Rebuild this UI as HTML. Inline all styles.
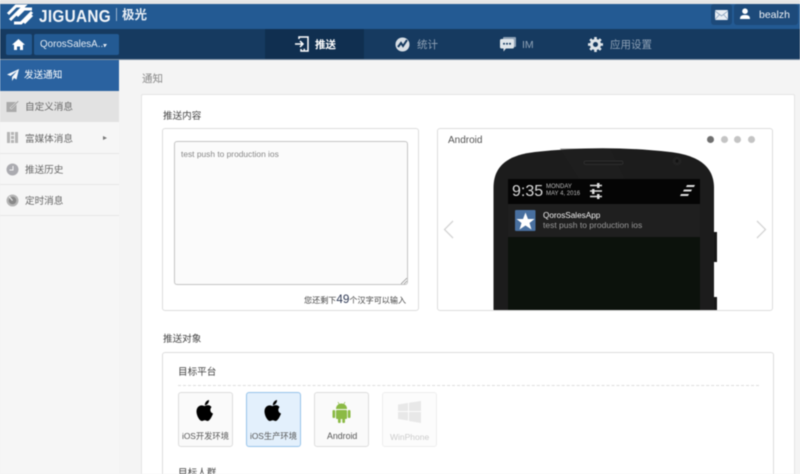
<!DOCTYPE html>
<html><head><meta charset="utf-8">
<style>
html,body{margin:0;padding:0;width:800px;height:474px;overflow:hidden;background:#f4f4f4}
body{position:relative;font-family:"Liberation Sans","Noto Sans CJK SC",sans-serif;color:#444}
.a{position:absolute}
.t{position:absolute;white-space:nowrap;line-height:14px}
#w{position:absolute;left:0;top:0;width:800px;height:474px;overflow:hidden;filter:blur(.45px)}
</style></head><body><div id="w">
<div class="a" style="left:0;top:0;width:800px;height:4px;background:#e6e6e6"></div>
<div class="a" style="left:0;top:4px;width:800px;height:25px;background:#235a93"></div>
<div class="a" style="left:0;top:29px;width:800px;height:30px;background:#163a60;border-bottom:1px solid #7d8fa3;box-sizing:content-box"></div>
<!-- logo -->
<svg class="a" style="left:6px;top:3px" width="28" height="23" viewBox="0 0 28 23" fill="none" stroke="#fff" stroke-width="3"><path d="M2 11 L10 3 H18 L4 17"/><path d="M8 20 H15 L26 9"/><path d="M11 13 L18 6 H26"/><path d="M18 20 L26 12"/></svg>
<div class="t" style="left:39px;top:6px;font-size:17.5px;line-height:20px;font-weight:bold;color:#f2f5f9;letter-spacing:.35px;transform:scaleX(.875);transform-origin:left center">JIGUANG</div>
<div class="a" style="left:116px;top:8px;width:1px;height:13px;background:#9db5cf"></div>
<div class="t" style="left:122px;top:7px;font-size:12.5px;line-height:16px;color:#e8eef5;font-weight:bold">极光</div>
<!-- top right -->
<div class="a" style="left:711px;top:4px;width:21px;height:21px;background:#1d4a7a;border-radius:3px"></div>
<svg class="a" style="left:715px;top:10px" width="13" height="10" viewBox="0 0 13 10"><rect width="13" height="10" rx="1" fill="#e9eef4"/><path d="M0 1 L6.5 6 L13 1 M0 9.5 L4.5 4.5 M13 9.5 L8.5 4.5" stroke="#8ba4bf" stroke-width=".8" fill="none"/></svg>
<div class="a" style="left:734px;top:4px;width:64px;height:21px;background:#1d4a7a;border-radius:3px"></div>
<svg class="a" style="left:739px;top:8px" width="12" height="12" viewBox="0 0 12 12" fill="#fff"><circle cx="6" cy="3.2" r="2.8"/><path d="M1 11 C1 7.5 3 7 6 7 C9 7 11 7.5 11 11 Z"/></svg>
<div class="t" style="left:759px;top:8px;font-size:10.5px;color:#f0f3f7">bealzh</div>
<!-- left nav controls -->
<div class="a" style="left:6px;top:34px;width:26px;height:21px;background:#235a93;border-radius:2px"></div>
<svg class="a" style="left:12px;top:39px" width="13" height="11" viewBox="0 0 13 11" fill="#fff"><path d="M6.5 0 L13 5.8 H11 V11 H8 V7.5 H5 V11 H2 V5.8 H0 Z"/></svg>
<div class="a" style="left:34px;top:34px;width:85px;height:21px;background:#235a93;border-radius:2px"></div>
<div class="t" style="left:40px;top:38px;font-size:9.8px;color:#e4ebf3">QorosSalesA...</div>
<div class="a" style="left:103px;top:44px;width:0;height:0;border-left:2.5px solid transparent;border-right:2.5px solid transparent;border-top:3px solid #e4ebf3"></div>
<!-- tabs -->
<div class="a" style="left:265px;top:29px;width:99px;height:30px;background:#102f50"></div>
<svg class="a" style="left:294px;top:36px" width="16" height="16" viewBox="0 0 16 16" fill="none" stroke="#fff" stroke-width="1.5"><path d="M5 3 V1 H14 V15 H7 V13"/><path d="M1 8 H8"/><path d="M6 5 L9 8 L6 11"/><path d="M9.5 13.5 H11" /></svg>
<div class="t" style="left:315px;top:38px;font-size:10.5px;font-weight:bold;color:#fff">推送</div>
<svg class="a" style="left:395px;top:37px" width="15" height="15" viewBox="0 0 15 15"><circle cx="7.500" cy="7.500" r="7" fill="#d8dfe6"/><path d="M3 10 L6 6 L8 9 L12 3" stroke="#163a60" stroke-width="2" fill="none"/></svg>
<div class="t" style="left:417px;top:38px;font-size:10.5px;color:#8fa2b6">统计</div>
<svg class="a" style="left:500px;top:37px" width="16" height="15" viewBox="0 0 16 15"><rect x="3" y="0" width="13" height="10" rx="1" fill="#8fa2b6"/><path d="M1.500 2 H12.500 Q14 2 14 3.500 V10 Q14 11.500 12.500 11.500 H6 L3.500 14.500 V11.500 H1.500 Q0 11.500 0 10 V3.500 Q0 2 1.500 2 Z" fill="#dfe5ea"/><circle cx="4" cy="6.700" r="1" fill="#163a60"/><circle cx="7" cy="6.700" r="1" fill="#163a60"/><circle cx="10" cy="6.700" r="1" fill="#163a60"/></svg>
<div class="t" style="left:522px;top:38px;font-size:10.5px;color:#8fa2b6">IM</div>
<svg class="a" style="left:588px;top:37px" width="15" height="15" viewBox="0 0 15 15"><circle cx="7.500" cy="7.500" r="4" fill="none" stroke="#dfe5ea" stroke-width="3"/><g stroke="#dfe5ea" stroke-width="2.600"><path d="M7.500 0 V3"/><path d="M7.500 12 V15"/><path d="M0 7.500 H3"/><path d="M12 7.500 H15"/><path d="M2.200 2.200 L4.300 4.300"/><path d="M10.700 10.700 L12.800 12.800"/><path d="M2.200 12.800 L4.300 10.700"/><path d="M10.700 4.300 L12.800 2.200"/></g></svg>
<div class="t" style="left:610px;top:38px;font-size:10.5px;color:#8fa2b6">应用设置</div>
<!-- sidebar -->
<div class="a" style="left:0;top:60px;width:119px;height:414px;background:#f6f6f6"></div>
<div class="a" style="left:0;top:60px;width:119px;height:31px;background:#2a62a0"></div>
<div class="a" style="left:0;top:91px;width:119px;height:31px;background:#e2e2e2"></div>
<div class="a" style="left:0;top:153px;width:119px;height:1px;background:#e6e6e6"></div>
<div class="a" style="left:0;top:184px;width:119px;height:1px;background:#e6e6e6"></div>
<div class="a" style="left:0;top:215px;width:119px;height:1px;background:#e6e6e6"></div>
<svg class="a" style="left:7px;top:69px" width="12" height="12" viewBox="0 0 12 12" fill="#f2f5f9"><path d="M12 0 L0 5.500 L3.500 7 L10 2 L5 8 V12 L7 9 L9.500 10.500 Z"/></svg>
<div class="t" style="left:24px;top:69px;font-size:9.6px;color:#fff">发送通知</div>
<svg class="a" style="left:6px;top:100px" width="13" height="13" viewBox="0 0 13 13"><rect x="0.500" y="2" width="10" height="10" fill="#aaa"/><path d="M4 8 L12 0.500 L13 1.500 L5.500 9 Z" fill="#999" stroke="#e2e2e2" stroke-width=".6"/></svg>
<div class="t" style="left:25px;top:101px;font-size:9.6px;color:#666">自定义消息</div>
<svg class="a" style="left:7px;top:132px" width="11" height="11" viewBox="0 0 11 11" fill="#b5b5b5"><rect x="0" y="0" width="3" height="11"/><rect x="8" y="0" width="3" height="11"/><rect x="4" y="0" width="3" height="3"/><rect x="4" y="4" width="3" height="3"/><rect x="4" y="8" width="3" height="3"/></svg>
<div class="t" style="left:25px;top:133px;font-size:9.6px;color:#666">富媒体消息</div>
<div class="a" style="left:103px;top:136px;width:0;height:0;border-top:2.500px solid transparent;border-bottom:2.500px solid transparent;border-left:4px solid #777"></div>
<svg class="a" style="left:6px;top:163px" width="13" height="13" viewBox="0 0 13 13"><circle cx="6.500" cy="6.500" r="6" fill="#ababb0"/><path d="M7 3 V7 H3.500" stroke="#f4f4f4" fill="none"/></svg>
<div class="t" style="left:25px;top:164px;font-size:9.6px;color:#666">推送历史</div>
<svg class="a" style="left:6px;top:194px" width="13" height="13" viewBox="0 0 13 13"><circle cx="6.500" cy="6.500" r="6" fill="#b5b5b5"/><circle cx="6.500" cy="6.500" r="3.800" fill="#888"/><path d="M3 2.500 L6.500 6.500" stroke="#eee"/></svg>
<div class="t" style="left:25px;top:195px;font-size:9.6px;color:#666">定时消息</div>
<!-- main -->
<div class="a" style="left:119px;top:60px;width:681px;height:414px;background:#f4f4f4"></div>
<div class="t" style="left:142px;top:72px;font-size:10.5px;color:#888">通知</div>
<div class="a" style="left:141px;top:94px;width:654px;height:390px;background:#fff;border:1px solid #e4e4e4;box-sizing:border-box;border-radius:2px"></div>
<div class="t" style="left:163px;top:110px;font-size:9.6px;color:#444">推送内容</div>
<div class="a" style="left:162px;top:128px;width:257px;height:183px;border:1px solid #ddd;border-radius:3px;box-sizing:border-box;background:#fff"></div>
<div class="a" style="left:174px;top:141px;width:234px;height:144px;border:1px solid #c4c4c4;border-radius:3px;box-sizing:border-box;background:#fbfbfb"></div>
<div class="t" style="left:181px;top:147px;font-size:8.4px;color:#888">test push to production ios</div>
<svg class="a" style="left:401px;top:278px" width="6" height="6" viewBox="0 0 6 6" stroke="#888" stroke-width=".7"><path d="M0 6 L6 0 M3 6 L6 3"/></svg>
<div class="t" style="left:304px;top:293px;font-size:8.1px;color:#444">您还剩下<span style="font-size:11.700px;color:#2f3a55">49</span>个汉字可以输入</div>
<!-- preview -->
<div class="a" style="left:437px;top:128px;width:336px;height:183px;border:1px solid #ddd;border-radius:3px;box-sizing:border-box;background:#fff"></div>
<div class="t" style="left:448px;top:134px;font-size:10px;color:#555">Android</div>
<div class="a" style="left:707px;top:136px;width:7px;height:7px;border-radius:50%;background:#6f6f6f"></div>
<div class="a" style="left:721px;top:136px;width:7px;height:7px;border-radius:50%;background:#c4c4c4"></div>
<div class="a" style="left:734px;top:136px;width:7px;height:7px;border-radius:50%;background:#c4c4c4"></div>
<div class="a" style="left:748px;top:136px;width:7px;height:7px;border-radius:50%;background:#c4c4c4"></div>
<svg class="a" style="left:443px;top:220px" width="11" height="19" viewBox="0 0 11 19" fill="none" stroke="#d4d4d4" stroke-width="1.300"><path d="M10 1 L1.500 9.500 L10 18"/></svg>
<svg class="a" style="left:756px;top:220px" width="11" height="19" viewBox="0 0 11 19" fill="none" stroke="#d4d4d4" stroke-width="1.300"><path d="M1 1 L9.500 9.500 L1 18"/></svg>
<!-- phone -->
<svg class="a" style="left:490px;top:148px" width="232" height="162" viewBox="0 0 232 162">
<rect x="224" y="84" width="3" height="30" fill="#181818"/>
<rect x="224" y="149" width="3" height="13" fill="#181818"/>
<path d="M3.500 162 V40 C3.500 16 20 7 45 4 C90 -1 135 -1 180 4 C205 7 224 16 224 40 V162 Z" fill="#1c1c1c"/>
<path d="M70 0.500 L120 0.500 L135 32 L90 32 Z" fill="#222" opacity=".45"/>
<rect x="94" y="13" width="39" height="3.500" rx="1.700" fill="#1c1c1c" stroke="#333" stroke-width=".7"/>
<circle cx="187" cy="13" r="4.500" fill="#222"/><circle cx="187" cy="13" r="1.500" fill="#111"/>
<rect x="18" y="31" width="192" height="131" fill="#0c120c"/>
<rect x="18" y="31" width="192" height="25" fill="#050505"/>
<rect x="18" y="56" width="192" height="33" fill="#1f1f1f"/>
<g stroke="#ddd" stroke-width="1.500"><path d="M100 37.500 H112"/><path d="M100 43 H112"/><path d="M100 48.500 H112"/></g>
<g fill="#ddd"><rect x="107" y="35" width="2.500" height="5"/><rect x="102" y="41" width="2.500" height="5"/><rect x="107" y="46" width="2.500" height="5"/></g>
<g fill="#ddd"><path d="M197 37 H205 L204 39 H196 Z"/><path d="M194 41.500 H202 L201 43.500 H193 Z"/><path d="M191 46 H199 L198 48 H190 Z"/></g>
<rect x="25" y="62" width="20.500" height="21" rx="1" fill="#486f9f"/>
<path d="M35.500 64.500 L38 71 L44.500 71 L39.500 75 L41.500 81.500 L35.500 77.500 L29.500 81.500 L31.500 75 L26.500 71 L33 71 Z" fill="#fff"/>
</svg>
<div class="t" style="left:512px;top:184px;font-size:16px;color:#d8d8d8;line-height:16px">9:35</div>
<div class="t" style="left:546px;top:184px;font-size:6px;line-height:7px;color:#bbb">MONDAY</div>
<div class="t" style="left:546px;top:191px;font-size:6px;line-height:7px;color:#bbb">MAY 4, 2016</div>
<div class="t" style="left:543px;top:211px;font-size:8.200px;line-height:10px;color:#f2f2f2">QorosSalesApp</div>
<div class="t" style="left:543px;top:220px;font-size:8.500px;line-height:10px;color:#999">test push to production ios</div>
<!-- target -->
<div class="t" style="left:163px;top:333px;font-size:9.600px;color:#444">推送对象</div>
<div class="a" style="left:162px;top:352px;width:612px;height:140px;border:1px solid #ddd;border-radius:3px;box-sizing:border-box;background:#fff"></div>
<div class="t" style="left:178px;top:366px;font-size:9.600px;color:#444">目标平台</div>
<div class="a" style="left:178px;top:385px;width:581px;height:0;border-top:1px dashed #ddd"></div>
<div class="a" style="left:178px;top:392px;width:55px;height:55px;border:1px solid #ddd;border-radius:3px;box-sizing:border-box;background:#fafafa"></div>
<div class="a" style="left:246px;top:392px;width:55px;height:55px;border:1px solid #97c3ea;border-radius:3px;box-sizing:border-box;background:#e3f0fc"></div>
<div class="a" style="left:314px;top:392px;width:55px;height:55px;border:1px solid #ddd;border-radius:3px;box-sizing:border-box;background:#fafafa"></div>
<div class="a" style="left:382px;top:392px;width:55px;height:55px;border:1px solid #eee;border-radius:3px;box-sizing:border-box;background:#fcfcfc"></div>
<svg class="a" style="left:196px;top:400px" width="18" height="21" viewBox="0 0 18 21" fill="#000"><path d="M9 6 C10.500 5 13.500 4.500 15.500 7 C14.500 8.500 14 9.500 14.500 11 C14.800 12 15.500 13 17 13.500 C15.800 17 13.500 21 11.500 21 C10.500 21 10 20.300 8.800 20.300 C7.500 20.300 7 21 6 21 C3.500 21 0.500 15.500 0.500 11.500 C0.500 7 3.800 5 6.500 5.500 C7.500 5.700 8.300 6 9 6 Z"/><path d="M8.800 5.300 C8.700 2.800 10.500 0.500 13 0 C13.200 2.500 11.300 5 8.800 5.300 Z"/></svg>
<svg class="a" style="left:264px;top:400px" width="18" height="21" viewBox="0 0 18 21" fill="#000"><path d="M9 6 C10.500 5 13.500 4.500 15.500 7 C14.500 8.500 14 9.500 14.500 11 C14.800 12 15.500 13 17 13.500 C15.800 17 13.500 21 11.500 21 C10.500 21 10 20.300 8.800 20.300 C7.500 20.300 7 21 6 21 C3.500 21 0.500 15.500 0.500 11.500 C0.500 7 3.800 5 6.500 5.500 C7.500 5.700 8.300 6 9 6 Z"/><path d="M8.800 5.300 C8.700 2.800 10.500 0.500 13 0 C13.200 2.500 11.300 5 8.800 5.300 Z"/></svg>
<svg class="a" style="left:332px;top:402px" width="19" height="21" viewBox="0 0 19 21" fill="#8bba45"><path d="M4 7 C4 3.500 6.500 1.500 9.500 1.500 C12.500 1.500 15 3.500 15 7 Z"/><rect x="4" y="8" width="11" height="9" rx="1"/><rect x="0.500" y="8" width="2.700" height="8" rx="1.300"/><rect x="15.800" y="8" width="2.700" height="8" rx="1.300"/><rect x="6" y="16" width="2.700" height="5" rx="1.300"/><rect x="10.300" y="16" width="2.700" height="5" rx="1.300"/><path d="M6 0 L7.500 3 M13 0 L11.500 3" stroke="#8bba45" stroke-width=".7"/></svg>
<svg class="a" style="left:398px;top:401px" width="23" height="22" viewBox="0 0 23 22" fill="#e8e8e8"><path d="M0 3.500 L10 2 V10 H0 Z"/><path d="M11 1.800 L23 0 V10 H11 Z"/><path d="M0 11 H10 V19.500 L0 18 Z"/><path d="M11 11 H23 V22 L11 20 Z"/></svg>
<div class="t" style="left:182px;top:429px;font-size:8.300px;color:#555">iOS开发环境</div>
<div class="t" style="left:250px;top:429px;font-size:8.300px;color:#555">iOS生产环境</div>
<div class="t" style="left:327px;top:429px;font-size:8.800px;color:#555">Android</div>
<div class="t" style="left:390px;top:430px;font-size:8.500px;color:#ccc">WinPhone</div>
<div class="t" style="left:178px;top:467px;font-size:9.600px;color:#444">目标人群</div>
</div></body></html>
